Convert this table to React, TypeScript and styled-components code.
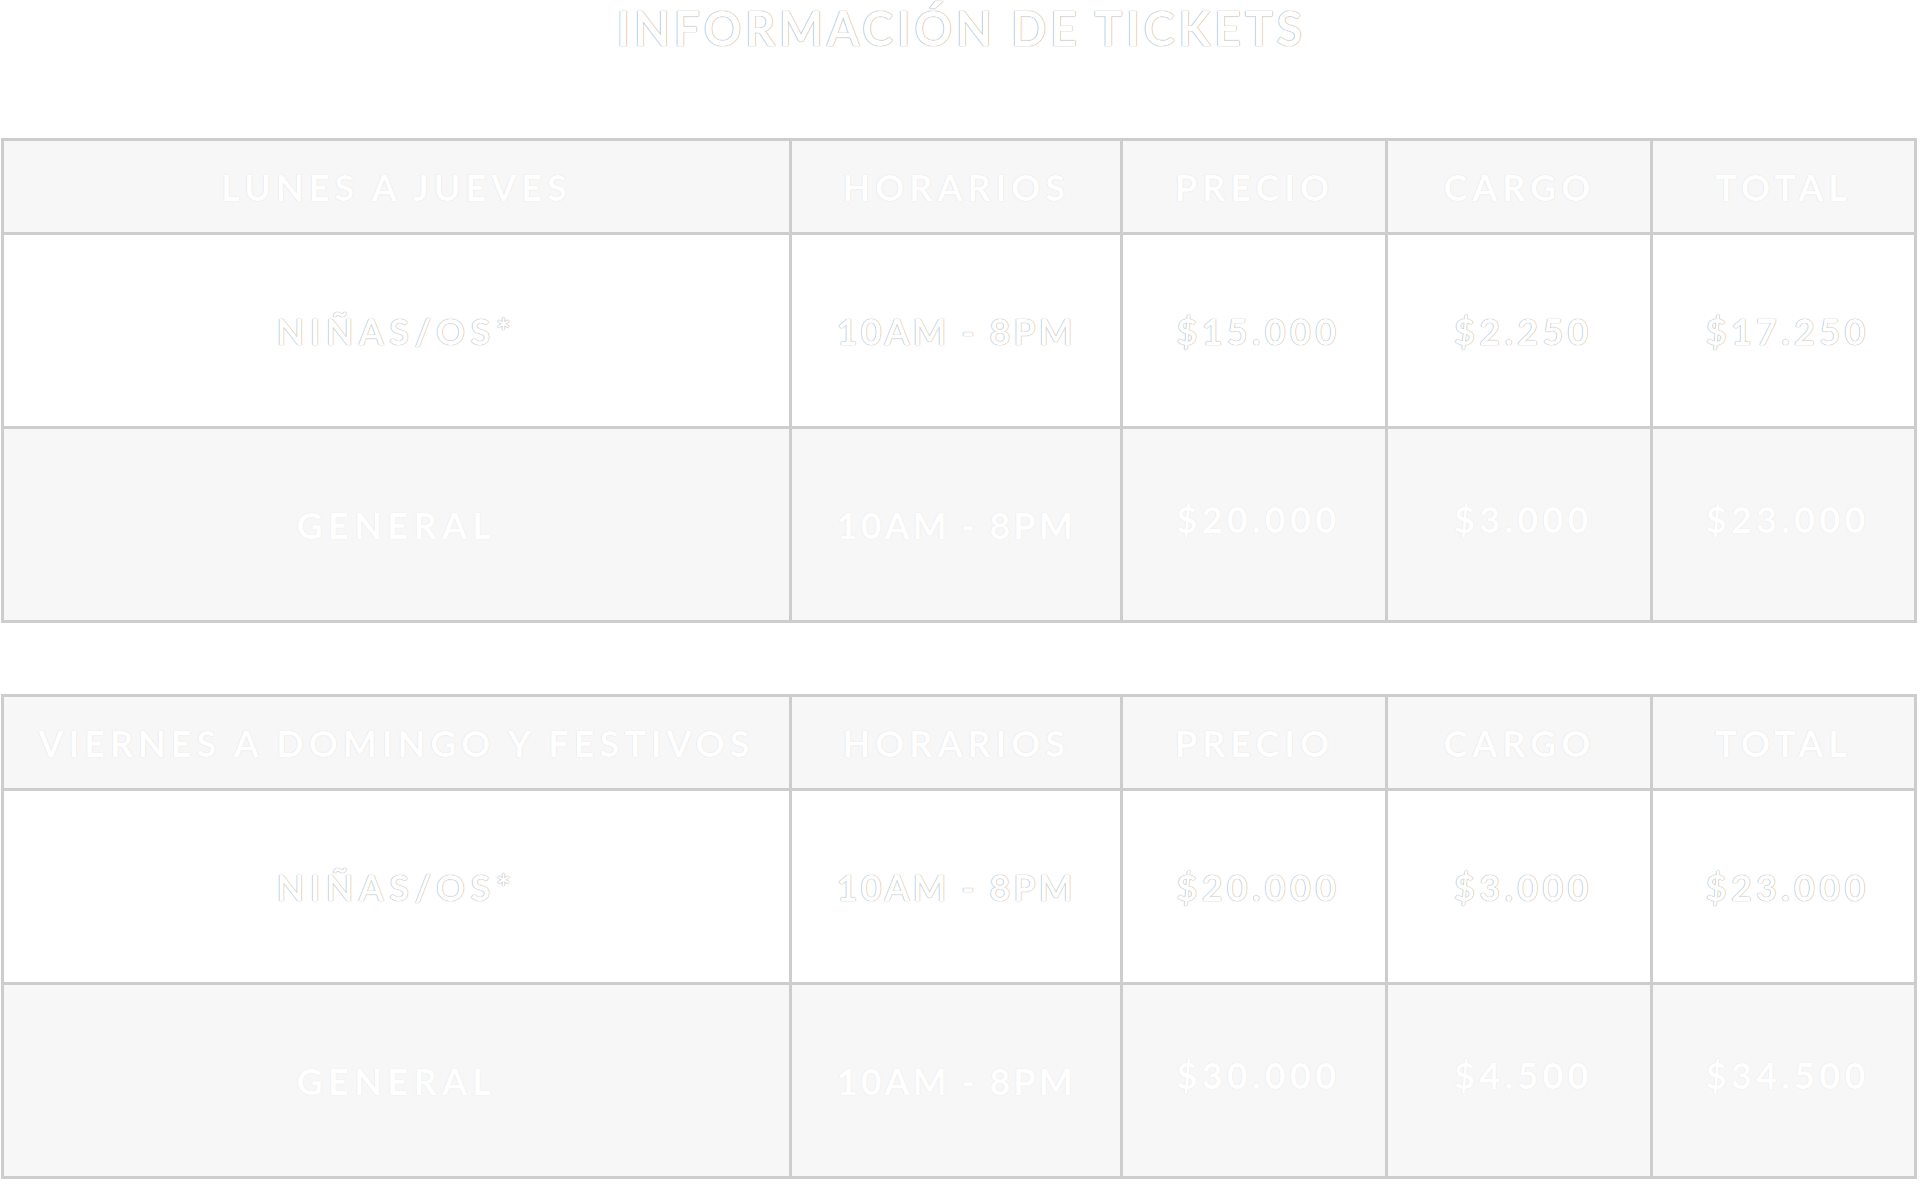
import React from 'react';
import { createGlobalStyle, styled } from 'styled-components';

type Tone = 'light' | 'shade';
type Kind = 'label' | 'hours' | 'money';

type Row = {
  label: string;
  hours: string;
  price: string;
  fee: string;
  total: string;
};

type Schedule = {
  days: string;
  rows: Row[];
};

const GlobalStyle = createGlobalStyle`
  html, body {
    margin: 0;
    padding: 0;
    background: #ffffff;
  }
  body {
    font-family: Lato, 'Open Sans', Arial, sans-serif;
  }
`;

const App = () => {
  return (
    <Page>
      <GlobalStyle />
      <Title>INFORMACIÓN DE TICKETS</Title>
      <Tables>
        {SCHEDULES.map((schedule) => (
          <PriceTable key={schedule.days}>
            <colgroup>
              <col style={{ width: '41.19%' }} />
              <col style={{ width: '17.33%' }} />
              <col style={{ width: '13.85%' }} />
              <col style={{ width: '13.85%' }} />
              <col style={{ width: '13.78%' }} />
            </colgroup>
            <thead>
              <tr>
                <HeadCell>{schedule.days}</HeadCell>
                <HeadCell>HORARIOS</HeadCell>
                <HeadCell>PRECIO</HeadCell>
                <HeadCell>CARGO</HeadCell>
                <HeadCell>TOTAL</HeadCell>
              </tr>
            </thead>
            <tbody>
              {schedule.rows.map((row, i) => {
                const tone: Tone = i % 2 === 0 ? 'light' : 'shade';
                const lift = tone === 'shade';
                return (
                  <BodyRow key={row.label} tone={tone}>
                    <Cell tone={tone} kind='label'>
                      {row.label}
                    </Cell>
                    <Cell tone={tone} kind='hours'>
                      {row.hours}
                    </Cell>
                    <Cell tone={tone} kind='money' $lift={lift}>
                      {row.price}
                    </Cell>
                    <Cell tone={tone} kind='money' $lift={lift}>
                      {row.fee}
                    </Cell>
                    <Cell tone={tone} kind='money' $lift={lift}>
                      {row.total}
                    </Cell>
                  </BodyRow>
                );
              })}
            </tbody>
          </PriceTable>
        ))}
      </Tables>
    </Page>
  );
};

const SPACING: Record<Kind, string> = {
  label: '5.4px',
  hours: '3px',
  money: '4.3px',
};

const Page = styled.div`
  width: 100%;
  padding: 0 3px 0 1px;
  box-sizing: border-box;
`;

const Title = styled.h1`
  margin: 0 0 81px 0;
  padding-left: 4px;
  font-size: 47px;
  line-height: 57px;
  font-weight: 700;
  letter-spacing: 3.6px;
  text-align: center;
  color: #ffffff;
  text-shadow: 0 0 1px rgba(0, 0, 0, 0.45), 0 0 1px rgba(0, 0, 0, 0.25);
`;

const Tables = styled.div`
  display: flex;
  flex-direction: column;
  gap: 71px;
`;

const PriceTable = styled.table`
  width: 100%;
  table-layout: fixed;
  border-collapse: collapse;
  border: 3px solid #cdcdcd;
`;

const HeadCell = styled.th`
  height: 91px;
  padding: 0;
  border: 3px solid #cdcdcd;
  background: #f7f7f7;
  font-size: 36px;
  font-weight: 700;
  letter-spacing: 5px;
  text-align: center;
  vertical-align: middle;
  color: #ffffff;
  text-shadow: 0 0 1px rgba(0, 0, 0, 0.16);
  white-space: nowrap;
`;

const BodyRow = styled.tr<{ tone: Tone }>`
  background: ${({ tone }) => (tone === 'light' ? '#ffffff' : '#f7f7f7')};
`;

const Cell = styled.td<{ tone: Tone; kind: Kind; $lift?: boolean }>`
  height: ${({ $lift }) => ($lift ? '180px' : '191px')};
  padding: 0 0 ${({ $lift }) => ($lift ? '11px' : '0')}
    ${({ kind }) => (kind === 'money' ? '8px' : '0')};
  border: 3px solid #cdcdcd;
  font-size: 36px;
  font-weight: 700;
  letter-spacing: ${({ kind }) => SPACING[kind]};
  text-align: center;
  vertical-align: middle;
  color: #ffffff;
  font-variant-numeric: tabular-nums;
  text-shadow: ${({ tone }) =>
    tone === 'light'
      ? '0 0 1px rgba(0, 0, 0, 0.4), 0 0 1px rgba(0, 0, 0, 0.2)'
      : '0 0 1px rgba(0, 0, 0, 0.12)'};
  white-space: nowrap;
`;

export default App;

const SCHEDULES: Schedule[] = [
  {
    days: 'LUNES A JUEVES',
    rows: [
      { label: 'NIÑAS/OS*', hours: '10AM - 8PM', price: '$15.000', fee: '$2.250', total: '$17.250' },
      { label: 'GENERAL', hours: '10AM - 8PM', price: '$20.000', fee: '$3.000', total: '$23.000' },
    ],
  },
  {
    days: 'VIERNES A DOMINGO Y FESTIVOS',
    rows: [
      { label: 'NIÑAS/OS*', hours: '10AM - 8PM', price: '$20.000', fee: '$3.000', total: '$23.000' },
      { label: 'GENERAL', hours: '10AM - 8PM', price: '$30.000', fee: '$4.500', total: '$34.500' },
    ],
  },
];
